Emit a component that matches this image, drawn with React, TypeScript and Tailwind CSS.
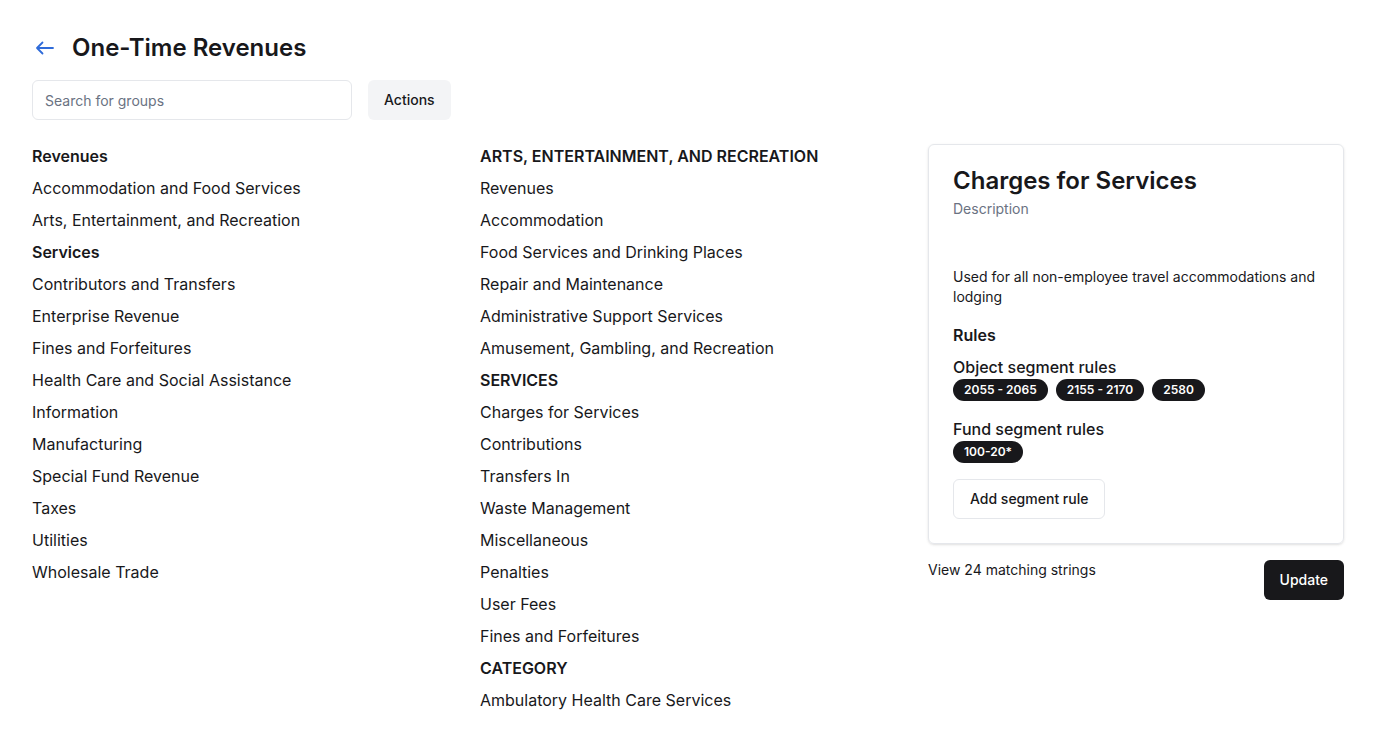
type Row = { label: string; heading?: boolean };

const leftRows: Row[] = [
  { label: "Revenues", heading: true },
  { label: "Accommodation and Food Services" },
  { label: "Arts, Entertainment, and Recreation" },
  { label: "Services", heading: true },
  { label: "Contributors and Transfers" },
  { label: "Enterprise Revenue" },
  { label: "Fines and Forfeitures" },
  { label: "Health Care and Social Assistance" },
  { label: "Information" },
  { label: "Manufacturing" },
  { label: "Special Fund Revenue" },
  { label: "Taxes" },
  { label: "Utilities" },
  { label: "Wholesale Trade" },
];

const middleRows: Row[] = [
  { label: "ARTS, ENTERTAINMENT, AND RECREATION", heading: true },
  { label: "Revenues" },
  { label: "Accommodation" },
  { label: "Food Services and Drinking Places" },
  { label: "Repair and Maintenance" },
  { label: "Administrative Support Services" },
  { label: "Amusement, Gambling, and Recreation" },
  { label: "SERVICES", heading: true },
  { label: "Charges for Services" },
  { label: "Contributions" },
  { label: "Transfers In" },
  { label: "Waste Management" },
  { label: "Miscellaneous" },
  { label: "Penalties" },
  { label: "User Fees" },
  { label: "Fines and Forfeitures" },
  { label: "CATEGORY", heading: true },
  { label: "Ambulatory Health Care Services" },
];

const objectRules = ["2055 - 2065", "2155 - 2170", "2580"];
const fundRules = ["100-20*"];

export default function App() {
  return (
    <div className="min-h-screen bg-white px-8 pt-8 font-['Inter',sans-serif] text-[#18181b]">
      <div className="flex h-8 items-center">
        <span className="flex w-10 items-center">
          <svg width="20" height="14" viewBox="0 0 20 14" fill="none" className="ml-[3px] text-[#2f6bd9]">
            <path
              d="M18 7H2M7.5 1.5L2 7l5.5 5.5"
              stroke="currentColor"
              strokeWidth="1.8"
              strokeLinecap="round"
              strokeLinejoin="round"
            />
          </svg>
        </span>
        <h1 className="text-2xl font-semibold leading-8">One-Time Revenues</h1>
      </div>

      <div className="mt-4 flex items-center gap-4">
        <input
          placeholder="Search for groups"
          className="h-10 w-80 rounded-md border border-gray-200 px-3 text-sm placeholder:text-gray-500 focus:outline-none"
        />
        <button className="h-10 rounded-md bg-gray-100 px-4 text-sm font-medium">Actions</button>
      </div>

      <div className="mt-5 grid grid-cols-3 gap-8">
        <GroupList rows={leftRows} />
        <GroupList rows={middleRows} />

        <div className="mt-1">
          <div className="rounded-md border border-gray-200 px-6 pb-6 pt-5 shadow-sm">
            <h2 className="text-2xl font-semibold leading-8">Charges for Services</h2>
            <p className="mt-0.5 text-sm leading-5 text-gray-500">Description</p>
            <p className="mt-12 text-sm leading-5">
              Used for all non-employee travel accommodations and lodging
            </p>

            <h3 className="mt-4 text-base font-semibold leading-6">Rules</h3>

            <p className="mt-2 text-base font-medium leading-6">Object segment rules</p>
            <div className="flex flex-wrap gap-2">
              {objectRules.map((rule) => (
                <Badge key={rule} label={rule} />
              ))}
            </div>

            <p className="mt-4 text-base font-medium leading-6">Fund segment rules</p>
            <div className="flex flex-wrap gap-2">
              {fundRules.map((rule) => (
                <Badge key={rule} label={rule} />
              ))}
            </div>

            <button className="mt-4 h-10 rounded-md border border-gray-200 px-4 text-sm font-medium">
              Add segment rule
            </button>
          </div>

          <div className="mt-4 flex items-start justify-between">
            <span className="text-sm leading-5">View 24 matching strings</span>
            <button className="h-10 rounded-md bg-[#18181b] px-4 text-sm font-medium text-white">
              Update
            </button>
          </div>
        </div>
      </div>
    </div>
  );
}

function GroupList({ rows }: { rows: Row[] }) {
  return (
    <ul>
      {rows.map((row, i) => (
        <li
          key={i}
          className={row.heading ? "text-base font-semibold leading-8" : "text-base leading-8"}
        >
          {row.label}
        </li>
      ))}
    </ul>
  );
}

function Badge({ label }: { label: string }) {
  return (
    <span className="inline-flex h-[22px] items-center rounded-full bg-[#18181b] px-[11px] text-xs font-semibold text-white">
      {label}
    </span>
  );
}
